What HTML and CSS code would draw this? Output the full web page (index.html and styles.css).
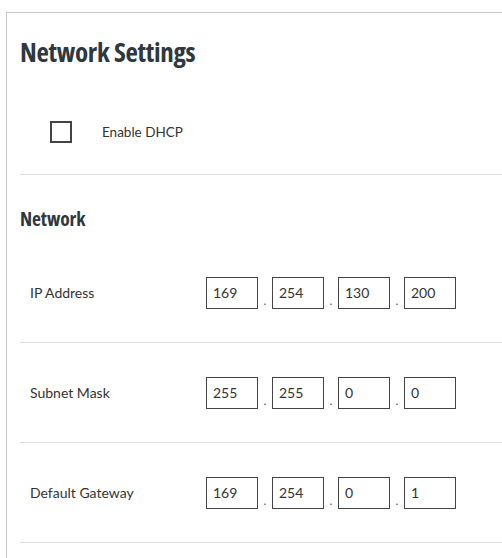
FILE: index.html
```html
<!DOCTYPE html>
<html>
<head>
<meta charset="utf-8">
<link rel="stylesheet" href="styles.css">
</head>
<body>
<div class="panel">
  <h1 class="title">Network Settings</h1>
  <div class="dhcp">
    <span class="checkbox"></span>
    <span class="dhcp-label">Enable DHCP</span>
  </div>
  <div class="section">
    <h2 class="section-title">Network</h2>
    <div class="row">
      <span class="label">IP Address</span>
      <div class="ip">
        <span class="octet">169</span><span class="dot">.</span>
        <span class="octet">254</span><span class="dot">.</span>
        <span class="octet">130</span><span class="dot">.</span>
        <span class="octet">200</span>
      </div>
    </div>
    <div class="row">
      <span class="label">Subnet Mask</span>
      <div class="ip">
        <span class="octet">255</span><span class="dot">.</span>
        <span class="octet">255</span><span class="dot">.</span>
        <span class="octet">0</span><span class="dot">.</span>
        <span class="octet">0</span>
      </div>
    </div>
    <div class="row">
      <span class="label">Default Gateway</span>
      <div class="ip">
        <span class="octet">169</span><span class="dot">.</span>
        <span class="octet">254</span><span class="dot">.</span>
        <span class="octet">0</span><span class="dot">.</span>
        <span class="octet">1</span>
      </div>
    </div>
  </div>
</div>
</body>
</html>
```
FILE: styles.css
```css
html, body {
  margin: 0;
  padding: 0;
  background: #fff;
  overflow: hidden;
}
body {
  font-family: Lato, "Liberation Sans", sans-serif;
  color: #333;
}
.panel {
  margin: 12px 0 0 6px;
  border-top: 1px solid #c8c8c8;
  border-left: 1px solid #c8c8c8;
  padding: 0 0 0 13px;
  height: 600px;
}
.title {
  margin: 0;
  padding-top: 24px;
  font-family: "Open Sans", sans-serif;
  font-stretch: condensed;
  font-size: 27px;
  line-height: 30px;
  font-weight: 700;
  color: #2e383e;
  letter-spacing: -0.3px;
}
.dhcp {
  display: flex;
  align-items: center;
  box-sizing: border-box;
  height: 85px;
  margin-top: 23px;
  padding-left: 30px;
  border-bottom: 1px solid #ddd;
}
.checkbox {
  width: 18px;
  height: 18px;
  border: 2px solid #444;
  flex: none;
}
.dhcp-label {
  margin-left: 30px;
  font-size: 13.5px;
  color: #333;
}
.section-title {
  margin: 0 0 13px;
  padding-top: 33px;
  font-family: "Open Sans", sans-serif;
  font-stretch: condensed;
  font-size: 19.5px;
  line-height: 22px;
  font-weight: 700;
  color: #2e383e;
  letter-spacing: -0.1px;
}
.row {
  display: flex;
  align-items: center;
  box-sizing: border-box;
  height: 100px;
  border-bottom: 1px solid #ddd;
  padding-left: 10px;
}
.label {
  width: 176px;
  font-size: 14px;
  color: #333;
}
.ip {
  display: flex;
  align-items: flex-end;
}
.octet {
  box-sizing: border-box;
  width: 52px;
  height: 32px;
  border: 1px solid #444;
  padding: 0 6px;
  font-size: 14px;
  line-height: 30px;
  color: #333;
}
.dot {
  width: 14px;
  text-align: center;
  font-size: 12px;
  line-height: 12px;
  padding-bottom: 2px;
  color: #4a5a6a;
}
```
